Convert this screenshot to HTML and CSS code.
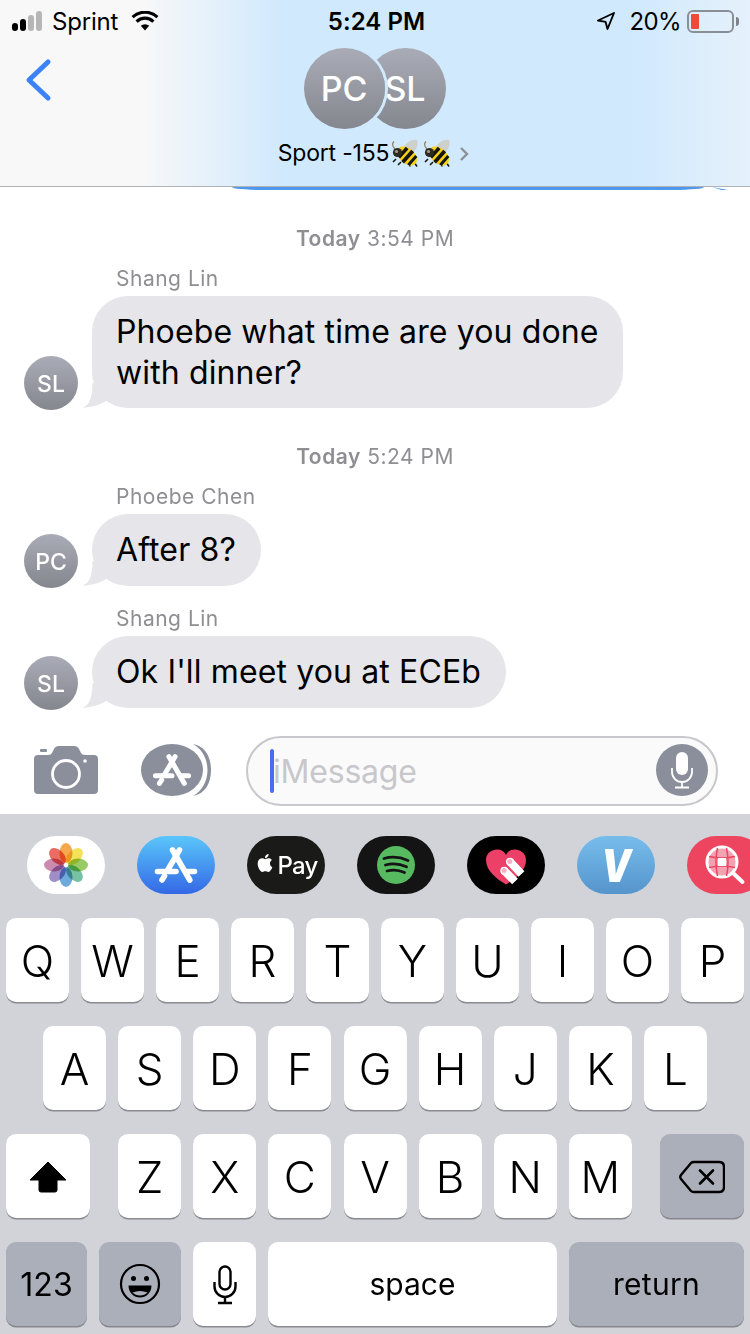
FILE: index.html
```html
<!DOCTYPE html>
<html lang="en">
<head>
<meta charset="utf-8">
<title>Messages</title>
<link rel="stylesheet" href="styles.css">
</head>
<body>
<svg class="defs" width="0" height="0" aria-hidden="true">
  <defs>
    <symbol id="bee" viewBox="0 0 28 28">
      <path d="M13 9C15 3 21 0 26 1C28 6 25 12 20 15Z" fill="#cfd0cc"/>
      <path d="M4 10C1 7 1 4 3 2.500" fill="none" stroke="#8a7d5a" stroke-width="1.200"/>
      <path d="M5 20l-3 3M10 23l-3 3M19 25l0 2.500M23 23l3 4.500" stroke="#1d1a14" stroke-width="1.600" fill="none"/>
      <g transform="rotate(42 16 17)">
        <ellipse cx="16" cy="17" rx="11.500" ry="7.500" fill="#f6d312"/>
        <path d="M9 11h3.600v12.500H9zM15 9.500h3.800v15H15zM21.500 10.800h3v12h-3z" fill="#17150f"/>
      </g>
      <circle cx="6.500" cy="13.500" r="4.600" fill="#2e2a20"/>
      <circle cx="5.500" cy="12.500" r="1.600" fill="#a19a8a"/>
    </symbol>
    <symbol id="store-a" viewBox="0 0 78 58">
      <g fill="none" stroke-linecap="round" stroke-width="5.600" stroke="currentColor">
        <path d="M35.500 14 52.800 44"/>
        <path d="M42.500 14 31 33.500M27.500 40 25 44"/>
        <path d="M20.500 35.500H39M49 35.500H57.500"/>
      </g>
    </symbol>
  </defs>
</svg>

<div class="phone">
  <header class="header">
    <div class="status">
      <div class="status-left">
        <div class="signal">
          <i class="bar bar-1"></i><i class="bar bar-2"></i><i class="bar bar-3"></i><i class="bar bar-4"></i>
        </div>
        <span class="carrier">Sprint</span>
        <svg class="wifi" viewBox="0 0 28 20" width="28" height="20">
          <path d="M14 19.500 9.800 14.800a6.200 6.200 0 0 1 8.400 0Z" fill="#000"/>
          <path d="M5.600 10.600a12 12 0 0 1 16.800 0M1.600 6.200a18 18 0 0 1 24.800 0" fill="none" stroke="#000" stroke-width="3.200"/>
        </svg>
      </div>
      <div class="clock">5:24 PM</div>
      <div class="status-right">
        <svg class="locate" viewBox="0 0 20 20" width="20" height="20">
          <path d="M18 2 2 9.500l7.600 1.400L11.500 18Z" fill="none" stroke="#000" stroke-width="1.900" stroke-linejoin="round"/>
        </svg>
        <span class="percent">20%</span>
        <div class="battery"><i class="battery-level"></i></div>
        <i class="battery-cap"></i>
      </div>
    </div>
    <svg class="back" viewBox="0 0 28 44" width="28" height="44">
      <path d="M24 4 5 22l19 18" fill="none" stroke="#3b82f6" stroke-width="5" stroke-linecap="round" stroke-linejoin="round"/>
    </svg>
    <div class="group-avatars">
      <div class="group-avatar group-avatar-front">PC</div>
      <div class="group-avatar group-avatar-back">SL</div>
    </div>
    <div class="title">
      <span class="title-text">Sport -155</span>
      <svg class="bee" width="28" height="28"><use href="#bee"/></svg>
      <svg class="bee bee-second" width="28" height="28"><use href="#bee"/></svg>
      <svg class="chevron" viewBox="0 0 10 16" width="10" height="16">
        <path d="M2 2l6 6-6 6" fill="none" stroke="#8b9097" stroke-width="2.400"/>
      </svg>
    </div>
  </header>

  <main class="thread">
    <div class="cut-bubble"><i class="cut-main"></i><i class="cut-tail"></i></div>

    <p class="stamp stamp-first"><b>Today</b> 3:54 PM</p>
    <p class="name">Shang Lin</p>
    <div class="row">
      <div class="avatar">SL</div>
      <div class="bubble bubble-wide">Phoebe what time are you done with dinner?<svg class="tail" viewBox="0 0 30 28" width="30" height="28"><path d="M0.500 27.500C7 27 11.500 20 11.500 3H30V20L25 21C18 25.500 8 28 0.500 27.500Z" fill="#e5e5ea"/></svg></div>
    </div>

    <p class="stamp"><b>Today</b> 5:24 PM</p>
    <p class="name">Phoebe Chen</p>
    <div class="row">
      <div class="avatar">PC</div>
      <div class="bubble">After 8?<svg class="tail" viewBox="0 0 30 28" width="30" height="28"><path d="M0.500 27.500C7 27 11.500 20 11.500 3H30V20L25 21C18 25.500 8 28 0.500 27.500Z" fill="#e5e5ea"/></svg></div>
    </div>

    <p class="name name-next">Shang Lin</p>
    <div class="row">
      <div class="avatar">SL</div>
      <div class="bubble">Ok I'll meet you at ECEb<svg class="tail" viewBox="0 0 30 28" width="30" height="28"><path d="M0.500 27.500C7 27 11.500 20 11.500 3H30V20L25 21C18 25.500 8 28 0.500 27.500Z" fill="#e5e5ea"/></svg></div>
    </div>
  </main>

  <section class="composer">
    <svg class="camera" viewBox="0 0 64 48" width="64" height="48">
      <path d="M4 9H14Q17 9 18 7L20 3Q21.500 0 25 0H40Q43.500 0 45 3L47 7Q48 9 51 9H60Q64 9 64 13V44Q64 48 60 48H4Q0 48 0 44V13Q0 9 4 9Z" fill="#8a8f9b"/>
      <rect x="6" y="3" width="7" height="3" rx="1" fill="#8a8f9b"/>
      <circle cx="32" cy="28" r="13.500" fill="none" stroke="#fff" stroke-width="2.800"/>
      <circle cx="51" cy="15" r="1.800" fill="#fff"/>
    </svg>
    <div class="apps-button">
      <svg class="apps-crescent" viewBox="0 0 70 52" width="70" height="52">
        <path d="M52 0C64 2 70 13 70 26S64 50 52 52C61 47 66.500 37 66.500 26S61 5 52 0Z" fill="#8a8f9b"/>
      </svg>
      <div class="apps-disc"><svg class="apps-a" width="70" height="52"><use href="#store-a"/></svg></div>
    </div>
    <div class="input">
      <i class="caret"></i>
      <span class="placeholder">iMessage</span>
      <div class="input-mic">
        <svg viewBox="0 0 24 38" width="24" height="38">
          <rect x="6" y="1" width="12" height="23" rx="6" fill="#fff"/>
          <path d="M2 17v4a10 10 0 0 0 20 0v-4M12 31v5M5 36.500h14" fill="none" stroke="#fff" stroke-width="1.800"/>
        </svg>
      </div>
    </div>
  </section>

  <section class="keyboard">
    <div class="tray">
      <div class="pill pill-photos">
        <svg viewBox="0 0 78 58" width="78" height="58">
          <g class="petals">
            <ellipse cx="39" cy="17" rx="6.500" ry="10" fill="#f5a13c"/>
            <ellipse cx="39" cy="17" rx="6.500" ry="10" fill="#f4e04c" transform="rotate(45 39 29)"/>
            <ellipse cx="39" cy="17" rx="6.500" ry="10" fill="#8fc757" transform="rotate(90 39 29)"/>
            <ellipse cx="39" cy="17" rx="6.500" ry="10" fill="#6cbc9d" transform="rotate(135 39 29)"/>
            <ellipse cx="39" cy="17" rx="6.500" ry="10" fill="#63a3da" transform="rotate(180 39 29)"/>
            <ellipse cx="39" cy="17" rx="6.500" ry="10" fill="#9a84c2" transform="rotate(225 39 29)"/>
            <ellipse cx="39" cy="17" rx="6.500" ry="10" fill="#c880a8" transform="rotate(270 39 29)"/>
            <ellipse cx="39" cy="17" rx="6.500" ry="10" fill="#ea5f52" transform="rotate(315 39 29)"/>
          </g>
        </svg>
      </div>
      <div class="pill pill-store"><svg width="78" height="58"><use href="#store-a"/></svg></div>
      <div class="pill pill-pay">
        <svg class="apple" viewBox="0 0 24 24" width="21" height="21">
          <path fill="#fff" d="M17.050 12.040c-.03-2.600 2.120-3.850 2.220-3.910-1.210-1.770-3.090-2.010-3.760-2.040-1.600-.16-3.120.94-3.930.94-.81 0-2.060-.92-3.390-.89-1.740.03-3.350 1.010-4.250 2.570-1.810 3.140-.46 7.800 1.300 10.350.86 1.250 1.890 2.650 3.240 2.600 1.300-.05 1.790-.84 3.360-.84 1.570 0 2.010.84 3.390.81 1.400-.02 2.290-1.270 3.140-2.530.99-1.450 1.400-2.860 1.420-2.930-.03-.01-2.720-1.040-2.740-4.130zM14.470 4.400c.72-.87 1.200-2.080 1.070-3.280-1.030.04-2.280.69-3.020 1.550-.66.77-1.240 2-1.090 3.180 1.150.09 2.330-.58 3.040-1.450z"/>
        </svg>
        <span class="pay-text">Pay</span>
      </div>
      <div class="pill pill-spotify">
        <svg viewBox="0 0 78 58" width="78" height="58">
          <circle cx="39" cy="29" r="19" fill="#57b960"/>
          <path d="M27 22.500q12-3.500 24 2M28.500 29q10.500-3 21 1.800M30 35q9-2.500 17.500 1.500" fill="none" stroke="#141414" stroke-width="2.800" stroke-linecap="round"/>
        </svg>
      </div>
      <div class="pill pill-heart">
        <svg viewBox="0 0 78 58" width="78" height="58">
          <path d="M39 48.500C30 43 19 35 19 24C19 17 25 13.500 30 13.500C34 13.500 37 15 39 19C41 15 44 13.500 48 13.500C53 13.500 59 17 59 24C59 35 48 43 39 48.500Z" fill="#ec4069"/>
          <path d="M43 25.700 54.500 38M37.300 34.700 48 45.500" stroke="#fff" stroke-width="8" fill="none"/>
          <circle cx="43" cy="25.700" r="4" fill="#fff"/>
          <circle cx="37.300" cy="34.700" r="4" fill="#fff"/>
          <circle cx="42.800" cy="25.500" r="2.500" fill="#f4b3c6"/>
          <circle cx="37.100" cy="34.500" r="2.500" fill="#f4b3c6"/>
        </svg>
      </div>
      <div class="pill pill-venmo"><span class="venmo-v">V</span></div>
      <div class="pill pill-search">
        <svg viewBox="0 0 78 58" width="78" height="58">
          <circle cx="35" cy="26" r="15" fill="#f4a2b2" stroke="#fff" stroke-width="3"/>
          <path d="M22 20.500q13 3 26 0M22 31.500q13-3 26 0M30.500 12q-3 14 0 28M39.500 12q3 14 0 28" stroke="#ed4560" stroke-width="1.500" fill="none"/>
          <rect x="31" y="22" width="8" height="8" fill="#fff"/>
          <path d="M46.500 37.500l9 8.500" stroke="#fff" stroke-width="4" stroke-linecap="round"/>
        </svg>
      </div>
    </div>

    <div class="keys">
      <div class="key-row">
        <div class="key">Q</div><div class="key">W</div><div class="key">E</div><div class="key">R</div><div class="key">T</div><div class="key">Y</div><div class="key">U</div><div class="key">I</div><div class="key">O</div><div class="key">P</div>
      </div>
      <div class="key-row key-row-home">
        <div class="key">A</div><div class="key">S</div><div class="key">D</div><div class="key">F</div><div class="key">G</div><div class="key">H</div><div class="key">J</div><div class="key">K</div><div class="key">L</div>
      </div>
      <div class="key-row key-row-lower">
        <div class="key key-shift">
          <svg viewBox="0 0 38 32" width="38" height="32"><path d="M19 1 37 19H28V29Q28 31 26 31H12Q10 31 10 29V19H1Z" fill="#000" stroke="#000" stroke-linejoin="round"/></svg>
        </div>
        <div class="key">Z</div><div class="key">X</div><div class="key">C</div><div class="key">V</div><div class="key">B</div><div class="key">N</div><div class="key">M</div>
        <div class="key key-fn key-delete">
          <svg viewBox="0 0 46 34" width="46" height="34">
            <path d="M15 2H40Q45 2 45 7V27Q45 32 40 32H15Q13 32 12 31L2 19Q0.500 17 2 15L12 3Q13 2 15 2Z" fill="none" stroke="#000" stroke-width="2.400"/>
            <path d="M21 10.500 34 23.500M34 10.500 21 23.500" stroke="#000" stroke-width="2.600" stroke-linecap="round"/>
          </svg>
        </div>
      </div>
      <div class="key-row">
        <div class="key key-fn key-num">123</div>
        <div class="key key-fn key-emoji">
          <svg viewBox="0 0 42 42" width="42" height="42">
            <circle cx="21" cy="21" r="19" fill="none" stroke="#000" stroke-width="2.200"/>
            <circle cx="14.500" cy="15.500" r="2.500"/>
            <circle cx="27.500" cy="15.500" r="2.500"/>
            <path d="M9.500 22.500H32.500C32.500 30 27 34.500 21 34.500S9.500 30 9.500 22.500Z"/>
            <path d="M13.500 29.500Q21 26.500 28.500 29.500Q25.500 32.500 21 32.500T13.500 29.500Z" fill="#abafba"/>
          </svg>
        </div>
        <div class="key">
          <svg viewBox="0 0 26 40" width="26" height="40">
            <rect x="7.500" y="1.500" width="11" height="23" rx="5.500" fill="none" stroke="#000" stroke-width="2.400"/>
            <path d="M2.500 17v4.500a10.500 10.500 0 0 0 21 0V17M13 32v6M6 38h14" fill="none" stroke="#000" stroke-width="2.400"/>
          </svg>
        </div>
        <div class="key key-space">space</div>
        <div class="key key-fn key-return">return</div>
      </div>
    </div>
  </section>
</div>
</body>
</html>
```

FILE: styles.css
```css
* { box-sizing: border-box; }
html, body { margin: 0; padding: 0; }
body { background: #fff; font-family: Inter, "Liberation Sans", sans-serif; color: #000; }
.defs { position: absolute; }
p { margin: 0; }
i { display: block; }

.phone { width: 750px; height: 1334px; display: flex; flex-direction: column; overflow: hidden; }

/* header */
.header {
  position: relative;
  height: 187px;
  flex: none;
  border-bottom: 1px solid #b0b2b4;
  background: linear-gradient(90deg, #f8f8f8 0, #f8f8f8 140px, #d0e9fd 285px, #d0e9fd 630px, #e5f1fb 750px);
}
.status { display: grid; grid-template-columns: 1fr auto 1fr; align-items: center; height: 42px; padding: 0 11px 0 12px; font-size: 24px; }
.status-left, .status-right { display: flex; align-items: center; }
.status-right { justify-content: flex-end; }
.signal { display: flex; align-items: flex-end; gap: 2px; height: 20px; margin-right: 10px; }
.bar { width: 6px; border-radius: 3px; }
.bar-1 { height: 8px; background: #000; }
.bar-2 { height: 12px; background: #000; }
.bar-3 { height: 16px; background: #b6b6b6; }
.bar-4 { height: 20px; background: #b6b6b6; }
.carrier { letter-spacing: -0.2px; }
.wifi { margin-left: 13px; }
.clock { font-weight: 600; letter-spacing: 0.05px; margin-left: 2px; }
.locate { margin-right: 13px; }
.percent { margin-right: 6px; letter-spacing: -0.6px; }
.battery { width: 47px; height: 23px; border: 2px solid #8a8f96; border-radius: 6px; padding: 2px; }
.battery-level { width: 8px; height: 15px; background: #ee4b36; border-radius: 1px; }
.battery-cap { width: 3px; height: 9px; margin-left: 2px; background: #7f848b; border-radius: 0 3px 3px 0; }
.back { position: absolute; left: 24px; top: 58px; }

.group-avatars { display: flex; justify-content: center; margin-top: 6px; padding-right: 1px; }
.group-avatar {
  width: 81px; height: 81px; border-radius: 50%;
  display: flex; align-items: center; justify-content: center;
  font-size: 34px; font-weight: 500; color: #fff;
  background: linear-gradient(#a9abb6, #85878f);
}
.group-avatar-front { position: relative; z-index: 1; box-shadow: 0 0 0 3px #d0e9fd; }
.group-avatar-back { margin-left: -20px; }

.title { display: flex; align-items: center; justify-content: center; height: 28px; margin-top: 9px; font-size: 23px; letter-spacing: -0.2px; padding-right: 3px; }
.title-text { padding-top: 1px; }
.bee { margin-left: 2px; margin-top: 1px; }
.bee-second { margin-left: 4px; }
.chevron { margin-left: 8px; margin-top: 3px; }

/* thread */
.thread { flex: 1; min-height: 0; overflow: hidden; background: #fff; }
.cut-bubble { position: relative; height: 3px; }
.cut-main { position: absolute; left: 232px; width: 472px; height: 3px; background: #4f98f0; border-radius: 0 0 30px 30px / 0 0 3px 3px; }
.cut-tail { position: absolute; left: 712px; width: 16px; height: 3px; background: #4f98f0; clip-path: polygon(0 0, 100% 100%, 60% 100%); }

.stamp { margin-top: 35px; padding-top: 1px; height: 26px; text-align: center; font-size: 21px; line-height: 26px; letter-spacing: 0.5px; color: #8e8e93; }
.stamp b { font-weight: 600; }
.name { margin: 15px 0 4px 116px; height: 26px; font-size: 21px; line-height: 26px; letter-spacing: 0.5px; color: #8e8e93; }
.name-next { margin-top: 20px; }

.row { display: flex; align-items: flex-end; gap: 14px; padding-left: 24px; }
.avatar {
  flex: none; width: 54px; height: 54px; margin-bottom: -2px; padding-top: 2px; border-radius: 50%;
  display: flex; align-items: center; justify-content: center;
  font-size: 23px; font-weight: 500; color: #fff;
  background: linear-gradient(#a9abb6, #85878f);
}
.bubble {
  position: relative;
  max-width: 531px; min-height: 72px; padding: 15px 25px 15px 24px;
  border-radius: 36px; background: #e5e5ea;
  font-size: 32px; line-height: 41px; letter-spacing: 0.13px;
}
.bubble-wide { padding-right: 20px; }
.tail { position: absolute; left: -11px; bottom: 0; }

/* composer */
.composer { flex: none; height: 94px; display: flex; align-items: flex-start; padding: 16px 0 0 34px; background: #fff; }
.camera { margin-top: 10px; margin-right: 43px; flex: none; }
.apps-button { position: relative; width: 70px; height: 52px; margin-top: 8px; margin-right: 35px; flex: none; }
.apps-crescent { position: absolute; left: 0; top: 0; }
.apps-disc { width: 62px; height: 52px; border-radius: 50%; background: #8a8f9b; color: #fff; overflow: hidden; }
.apps-a { margin-left: -4px; display: block; }
.input { position: relative; width: 472px; height: 70px; display: flex; align-items: center; padding-left: 22px; border: 2px solid #c7c7cc; border-radius: 35px; background: #fafafa; }
.caret { width: 4px; height: 44px; border-radius: 2px; background: #4a6cf0; flex: none; }
.placeholder { margin-left: -1px; font-size: 32px; color: #c7c7cc; letter-spacing: -0.2px; }
.input-mic { position: absolute; right: 8px; top: 6px; width: 52px; height: 52px; border-radius: 50%; background: #8a8f9b; display: flex; align-items: center; justify-content: center; }

/* keyboard */
.keyboard { flex: none; height: 520px; background: #d1d3d9; padding-top: 22px; }
.tray { display: flex; gap: 32px; padding-left: 27px; height: 58px; overflow: hidden; }
.pill { flex: none; width: 78px; height: 58px; border-radius: 29px / 29px; display: flex; align-items: center; justify-content: center; }
.pill-photos { background: #fff; }
.petals ellipse { mix-blend-mode: multiply; opacity: .92; }
.pill-store { background: linear-gradient(#5ac6fa, #3468e6); color: #fff; }
.pill-pay { background: #1a1a18; gap: 2px; color: #fff; }
.apple { margin-top: -3px; }
.pay-text { font-size: 24px; font-weight: 500; letter-spacing: -0.8px; }
.pill-spotify { background: #141414; }
.pill-heart { background: #000; }
.pill-venmo { background: linear-gradient(#77bdec, #5594cc); color: #fff; }
.venmo-v { display: block; font-size: 46px; line-height: 58px; font-weight: 900; font-style: italic; transform: scaleX(.82); }
.pill-search { background: #ed4560; }

.keys { display: flex; flex-direction: column; gap: 24.5px; margin-top: 24px; padding: 0 6px; }
.key-row { display: flex; gap: 12px; }
.key-row-home { padding-left: 37px; gap: 12.14px; }
.key-row-lower { gap: 12.14px; }
.key {
  flex: none; width: 63px; height: 83.5px; padding-top: 2px; border-radius: 10px;
  display: flex; align-items: center; justify-content: center;
  background: #fff; box-shadow: 0 1.500px 0 #898b90;
  font-size: 44px; font-weight: 300;
}
.key-fn { background: #abafba; box-shadow: 0 1.500px 0 #85878c; }
.key-shift { width: 84px; margin-right: 16px; }
.key-delete { width: 84px; margin-left: 16px; }
.key-num { width: 81px; font-size: 32px; font-weight: 400; }
.key-emoji { width: 82px; padding-top: 0; }
.key-space { width: 289px; font-size: 30px; font-weight: 400; padding-top: 0; }
.key-return { width: 175px; font-size: 30px; font-weight: 400; padding-top: 0; letter-spacing: 0.3px; }
```
